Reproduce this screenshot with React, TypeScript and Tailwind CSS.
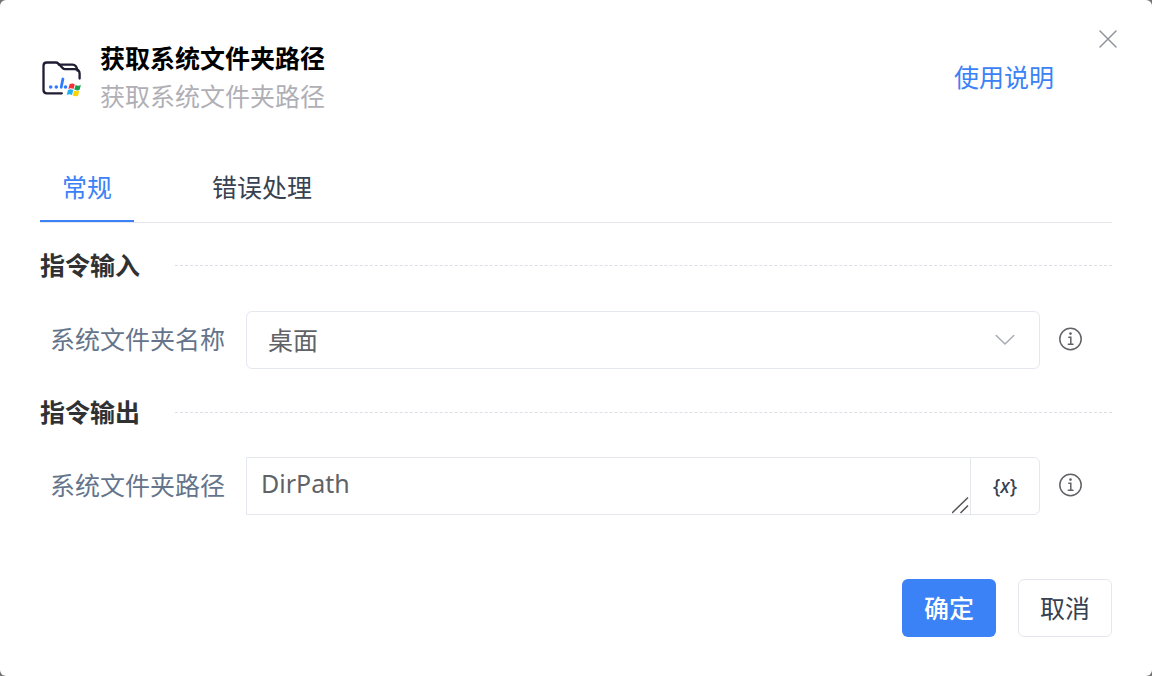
import React, { useState } from "react";

function FolderIcon() {
  return (
    <svg viewBox="0 0 42 38" className="h-[38px] w-[42px] shrink-0 overflow-visible" fill="none" aria-hidden="true">
      <path
        d="M21.800 35.300H6.800C4.800 35.300 3.500 34 3.500 32V7.800C3.500 5.700 4.800 4.500 6.800 4.500H15.800C16.800 4.500 17.600 4.800 18.300 5.500L23 10.400C23.500 10.900 24.100 11.200 24.800 11.200H34.500C38 11.200 39.600 12.700 39.600 15.700V20.500"
        stroke="#1f1d33"
        strokeWidth="2.300"
        strokeLinecap="round"
        strokeLinejoin="round"
      />
      <path
        d="M18.600 6.600H32.500C35.500 6.600 36.800 8.300 37.500 12.500"
        stroke="#1f1d33"
        strokeWidth="2.300"
        strokeLinecap="round"
      />
      <circle cx="10.700" cy="29" r="1.800" fill="#2f7bff" />
      <circle cx="16.300" cy="29" r="1.800" fill="#2f7bff" />
      <path d="M22.900 21L21.200 29.300" stroke="#2f7bff" strokeWidth="2.800" strokeLinecap="round" />
      <circle cx="25.500" cy="29" r="1.800" fill="#2f7bff" />
      <path d="M29.600 26.300C31.300 25.300 33.300 25.400 34.800 26.400L33.600 31.100C32 30.200 30.200 30.100 28.300 31Z" fill="#f2303c" />
      <path d="M35.600 26.900C37.300 28 39.100 27.900 40.900 27L39.600 31.800C37.900 32.700 36.100 32.600 34.300 31.600Z" fill="#12a150" />
      <path d="M28 31.900C29.800 31.100 31.700 31.200 33.300 32.100L32 37C30.400 36.100 28.600 36 26.700 36.900Z" fill="#21b1f3" />
      <path d="M34.100 32.600C35.800 33.600 37.500 33.600 39.300 32.700L38 37.700C36.300 38.600 34.500 38.500 32.700 37.500Z" fill="#ffd500" />
    </svg>
  );
}

function InfoButton({ label }: { label: string }) {
  return (
    <button type="button" aria-label={label} className="mb-0.5 ml-[18px] h-6 w-6 shrink-0 text-[#606266]">
      <svg viewBox="0 0 24 24" className="h-6 w-6" fill="none" stroke="currentColor" strokeWidth="1.500">
        <circle cx="12.500" cy="12" r="10.700" />
        <circle cx="12.500" cy="6.600" r="1.300" fill="currentColor" stroke="none" />
        <path d="M10.800 10.200H12.800V17M10.300 17.300H15" strokeLinecap="round" />
      </svg>
    </button>
  );
}

function SectionTitle({ children }: { children: React.ReactNode }) {
  return (
    <div className="flex h-[38px] items-center gap-[35px]">
      <h2 className="font-bold text-[#303133]">{children}</h2>
      <div className="flex-1 border-t border-dashed border-[#dcdfe6]" />
    </div>
  );
}

const tabs = ["常规", "错误处理"];

export default function App() {
  const [active, setActive] = useState(0);
  const [path, setPath] = useState("DirPath");

  return (
    <div className="min-h-screen bg-[#737373] font-['Noto_Sans','Noto_Sans_CJK_SC',sans-serif] text-[25px] leading-[38px]">
      <div role="dialog" aria-labelledby="dialog-title" className="relative min-h-screen rounded-md bg-white px-10 pt-[39px] pb-[39px]">
        <button type="button" aria-label="关闭" className="absolute top-[29px] right-[34px] text-[#909399]">
          <svg viewBox="0 0 20 20" className="h-5 w-5" stroke="currentColor" strokeWidth="1.500" strokeLinecap="round">
            <path d="M2 2L18 18M18 2L2 18" />
          </svg>
        </button>

        <header className="flex items-center">
          <FolderIcon />
          <div className="ml-[18px] flex-1">
            <h1 id="dialog-title" className="font-bold text-black">获取系统文件夹路径</h1>
            <p className="text-[#afafb5]">获取系统文件夹路径</p>
          </div>
          <a href="#help" className="mr-[58px] text-[#3b82f6]">使用说明</a>
        </header>

        <div role="tablist" className="mt-[38px] flex h-[70px] gap-14 border-b border-[#e4e7ed]">
          {tabs.map((tab, i) => (
            <button
              key={tab}
              type="button"
              role="tab"
              aria-selected={active === i}
              onClick={() => setActive(i)}
              className={
                active === i
                  ? "border-b-2 border-[#3b82f6] px-[22px] text-[#3b82f6]"
                  : "border-b-2 border-transparent px-[22px] text-[#374151]"
              }
            >
              {tab}
            </button>
          ))}
        </div>

        <section className="mt-[23px]">
          <SectionTitle>指令输入</SectionTitle>
          <div className="mt-[27px] flex items-center pr-[30px]">
            <label htmlFor="folder" className="ml-[10px] w-[196px] shrink-0 pb-0.5 text-[#64748b]">系统文件夹名称</label>
            <div className="relative flex-1">
              <select
                id="folder"
                className="block h-[58px] w-full appearance-none rounded-md border border-[#e4e7ed] bg-white px-[21px] text-[#606266]"
              >
                <option>桌面</option>
              </select>
              <svg
                viewBox="0 0 20 12"
                className="pointer-events-none absolute top-[23px] right-[25px] h-3 w-5 text-[#a8abb2]"
                fill="none"
                stroke="currentColor"
                strokeWidth="1.500"
                strokeLinecap="round"
                strokeLinejoin="round"
              >
                <path d="M1.200 1.500L10 10L18.800 1.500" />
              </svg>
            </div>
            <InfoButton label="系统文件夹名称说明" />
          </div>
        </section>

        <section className="mt-6">
          <SectionTitle>指令输出</SectionTitle>
          <div className="mt-[26px] flex items-center pr-[30px]">
            <label htmlFor="path" className="ml-[10px] w-[196px] shrink-0 pb-0.5 text-[#64748b]">系统文件夹路径</label>
            <div className="flex h-[58px] flex-1 overflow-hidden rounded-r-md border border-[#e4e7ed]">
              <div className="relative flex-1">
                <textarea
                  id="path"
                  rows={1}
                  value={path}
                  onChange={(e) => setPath(e.target.value)}
                  className="block h-full w-full resize-none overflow-hidden px-[14px] py-1.5 text-[#606266]"
                />
                <svg viewBox="0 0 18 18" className="pointer-events-none absolute right-0 bottom-0 h-[18px] w-[18px] text-[#555555]" stroke="currentColor" strokeWidth="1.500">
                  <path d="M0 17L16 1.500M8.500 17L16 9.500" />
                </svg>
              </div>
              <button
                type="button"
                aria-label="插入变量"
                className="w-[69px] shrink-0 border-l border-[#e4e7ed] text-[19px] font-medium text-[#374151]"
              >
                {"{"}<i>x</i>{"}"}
              </button>
            </div>
            <InfoButton label="系统文件夹路径说明" />
          </div>
        </section>

        <footer className="mt-16 flex justify-end gap-[22px]">
          <button type="button" className="h-[58px] rounded-md bg-[#3b82f6] px-[22px] font-medium text-white">确定</button>
          <button type="button" className="h-[58px] rounded-md border border-[#e4e7ed] bg-white px-[21px] text-[#374151]">取消</button>
        </footer>
      </div>
    </div>
  );
}
